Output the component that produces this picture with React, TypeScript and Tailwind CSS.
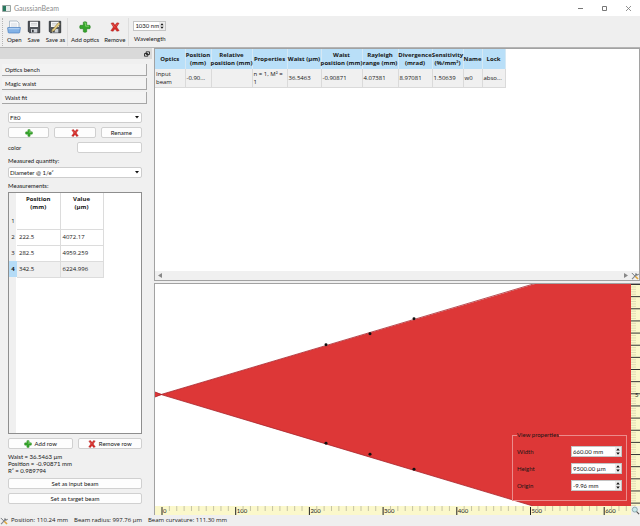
import { useState } from 'react';
import type { ReactNode } from 'react';

const columns = [
  { lines: ['Optics'], width: 'w-[30px]', value: 'Input beam', wrap: true },
  { lines: ['Position', '(mm)'], width: 'w-[26px]', value: '-0.90...', wrap: false },
  { lines: ['Relative', 'position (mm)'], width: 'w-[41px]', value: '', wrap: false },
  { lines: ['Properties'], width: 'w-[35px]', value: 'n = 1, M² = 1', wrap: true },
  { lines: ['Waist (µm)'], width: 'w-[34px]', value: '36.5463', wrap: false },
  { lines: ['Waist', 'position (mm)'], width: 'w-[41px]', value: '-0.90871', wrap: false },
  { lines: ['Rayleigh', 'range (mm)'], width: 'w-[36px]', value: '4.07381', wrap: false },
  { lines: ['Divergence', '(mrad)'], width: 'w-[34px]', value: '8.97081', wrap: false },
  { lines: ['Sensitivity', '(%/mm²)'], width: 'w-[31px]', value: '1.50639', wrap: false },
  { lines: ['Name'], width: 'w-[19px]', value: 'w0', wrap: false },
  { lines: ['Lock'], width: 'w-[23px]', value: 'abso...', wrap: false },
];

const measurements = [
  { position: '', value: '' },
  { position: '222.5', value: '4072.17' },
  { position: '282.5', value: '4959.259' },
  { position: '342.5', value: '6224.996' },
];

const viewFields = [
  { id: 'view-width', label: 'Width', value: '660.00 mm' },
  { id: 'view-height', label: 'Height', value: '9500.00 µm' },
  { id: 'view-origin', label: 'Origin', value: '-9.96 mm' },
];

// [x, y] of the measured radii, in plot units
const points = [
  [171, 61],
  [215, 50],
  [259, 35],
  [171, 160],
  [215, 171],
  [259, 186],
];

function PlusIcon({ className }: { className: string }) {
  return (
    <svg viewBox="0 0 12 12" className={className} aria-hidden="true">
      <path d="M4.3 1.2Q6 .1 7.7 1.2V4.3H10.8Q11.9 6 10.8 7.7H7.7V10.8Q6 11.9 4.3 10.8V7.7H1.2Q.1 6 1.2 4.3H4.3Z" fill="#35a52c" stroke="#25801f" strokeWidth=".6" />
      <path d="M5.2 2Q6 1.6 6.6 2V5.2H10" fill="none" stroke="#8bdb72" strokeWidth=".8" />
    </svg>
  );
}

function CrossIcon({ className }: { className: string }) {
  return (
    <svg viewBox="0 0 12 12" className={className} aria-hidden="true">
      <path d="M1.2 1.5 4 .9 6 3.8 8.3.9 10.9 1.4 8 5.9 11 10.4 8.2 11.2 6 8.1 3.8 11.2 1 10.5 4 5.9Z" fill="#d42a27" stroke="#a81614" strokeWidth=".5" />
      <path d="M2.4 1.9 6 6.6M9.4 1.9 7 5" fill="none" stroke="#f07a70" strokeWidth=".7" />
    </svg>
  );
}

function OpenIcon() {
  return (
    <svg viewBox="0 0 14 14" className="size-[14px]" aria-hidden="true">
      <path d="M2.5 1H10l2 2v6H2.5Z" fill="#f7f9fb" stroke="#9aa9b8" strokeWidth=".7" />
      <path d="M4 4h6M4 6h6" stroke="#c5ced8" strokeWidth=".7" />
      <path d="M1 7.5h12.4L12.7 12.4Q12.5 13 12 13H2Q1.3 13 1.2 12.4L.6 8Q.6 7.5 1 7.5Z" fill="#83b2e6" stroke="#4d83c0" strokeWidth=".7" />
      <path d="M1.6 8.7h11" stroke="#c3dcf8" strokeWidth=".9" />
    </svg>
  );
}

function SaveIcon({ pencil = false }: { pencil?: boolean }) {
  return (
    <svg viewBox="0 0 14 14" className="size-[14px]" aria-hidden="true">
      <path d="M1.3 1.3H12.7V12.7H2.5L1.3 11.5Z" fill="#50555b" stroke="#2f3338" strokeWidth=".9" />
      <path d="M3 1.7H11V7H3Z" fill="#f4f5f6" />
      <path d="M4 3.5h6M4 5h6" stroke="#b7bbc0" strokeWidth=".6" />
      <path d="M4 9H10.3V12.6H4Z" fill="#cbd0d5" />
      <path d="M5 9.7H6.7V12.2H5Z" fill="#3a3e43" />
      {pencil && <path d="M4.2 9.8 10.6 2.5 12.2 4 5.9 11 3.7 11.6Z" fill="#e7cf83" stroke="#85713c" strokeWidth=".6" />}
    </svg>
  );
}

function ToolsIcon({ className }: { className: string }) {
  return (
    <svg viewBox="0 0 10 10" className={className} aria-hidden="true">
      <path d="M1 1.2 5.2 5.4" stroke="#72777c" strokeWidth="1.2" />
      <path d="M5 5 8.8 8.8" stroke="#e0a63a" strokeWidth="2" />
      <path d="M1.3 8.8 7 3" stroke="#80868c" strokeWidth="1.4" />
      <path d="M6.2 1.5V3.7H8.6L9.4 2.4" fill="none" stroke="#565b60" strokeWidth="1.1" />
    </svg>
  );
}

function ToolButton({ icon, label }: { icon: ReactNode; label: string }) {
  return (
    <button type="button" className="flex flex-col items-center gap-[2px] leading-[8px]">
      {icon}
      <span>{label}</span>
    </button>
  );
}

function SpinBox({ id, initial, className }: { id: string; initial: string; className: string }) {
  const [value, setValue] = useState(initial);
  return (
    <div className={`flex border border-[#c4c4c4] bg-white ${className}`}>
      <input id={id} value={value} onChange={(e) => setValue(e.target.value)} className="w-0 min-w-0 flex-1 pl-px leading-[8px] outline-none" />
      <svg viewBox="0 0 6 10" className="h-full w-[6px] bg-[#ececec]" aria-hidden="true">
        <path d="M1 4 3 1.5 5 4ZM1 6 3 8.5 5 6Z" fill="#111" />
      </svg>
    </div>
  );
}

function PanelButton({ children, label }: { children: ReactNode; label?: string }) {
  return (
    <button type="button" aria-label={label} className="flex h-[11px] flex-1 items-center justify-center gap-[3px] rounded-[2px] border border-[#d0d0d0] bg-[#fdfdfd] leading-[9px]">
      {children}
    </button>
  );
}

function TitleBar() {
  return (
    <header className="flex h-4 items-center bg-white pr-[8px] pl-[2px] text-[7px] text-[#8c8c8c]">
      <svg viewBox="0 0 9 7" className="h-[7px] w-[9px]" aria-hidden="true">
        <path d="M.5.5h8v6h-8Z" fill="#e5ecea" stroke="#9aa5a2" />
        <path d="M1 1h3v5H1Z" fill="#28795f" />
      </svg>
      <h1 className="ml-[3px] flex-1">GaussianBeam</h1>
      <div className="flex gap-[17px]">
        <button type="button" aria-label="Minimize">
          <svg viewBox="0 0 7 7" className="size-[7px]"><path d="M1 3.5h5" stroke="#777" /></svg>
        </button>
        <button type="button" aria-label="Maximize">
          <svg viewBox="0 0 7 7" className="size-[7px]"><path d="M1.5 1.5h4v4h-4Z" fill="none" stroke="#777" /></svg>
        </button>
        <button type="button" aria-label="Close">
          <svg viewBox="0 0 7 7" className="size-[7px]"><path d="m1 1 5 5m0-5-5 5" stroke="#777" strokeWidth=".8" /></svg>
        </button>
      </div>
    </header>
  );
}

function Toolbar() {
  return (
    <div className="flex h-[31px] items-center bg-[#efefef] pl-[2px]">
      <div className="h-7 border-l border-dotted border-[#b5b5b5]" />
      <div className="flex gap-[5px] pr-[2px] pl-[4px]">
        <ToolButton icon={<OpenIcon />} label="Open" />
        <ToolButton icon={<SaveIcon />} label="Save" />
        <ToolButton icon={<SaveIcon pencil />} label="Save as" />
      </div>
      <div className="flex h-7 items-center gap-[5px] border-x border-[#dedede] px-[3px]">
        <ToolButton icon={<PlusIcon className="size-[14px] p-px" />} label="Add optics" />
        <ToolButton icon={<CrossIcon className="size-[14px] p-[2px]" />} label="Remove" />
      </div>
      <div className="flex flex-col items-center gap-[4px] pl-[4px]">
        <SpinBox id="wavelength" initial="1030 nm" className="h-[10px] w-[33px]" />
        <label htmlFor="wavelength" className="leading-[8px]">Wavelength</label>
      </div>
    </div>
  );
}

function Sidebar() {
  return (
    <aside className="flex w-[152px] shrink-0 flex-col bg-[#f0f0f0]">
      <div className="flex h-[11px] items-center justify-end bg-[#d9d9d9] pr-[2px]">
        <button type="button" aria-label="Float panel">
          <svg viewBox="0 0 7 7" className="size-[6px]">
            <path d="M2.5 1h4v3h-4ZM.5 3h4v3h-4Z" fill="#eee" stroke="#111" />
          </svg>
        </button>
      </div>
      <div className="flex flex-col gap-[2px] pt-[5px] pr-[5px] pl-[2px]">
        {['Optics bench', 'Magic waist', 'Waist fit'].map((name) => (
          <button key={name} type="button" className="h-3 border-r border-b border-[#a6a6a6] bg-[#f3f3f3] pl-[3px] text-left leading-[10px]">
            {name}
          </button>
        ))}
      </div>

      <div className="flex flex-1 flex-col pt-[8px] pr-[10px] pb-[11px] pl-[8px]">
        <Dropdown label="Fit" options={['Fit0']} />
        <div className="mt-[4px] flex gap-[5px]">
          <PanelButton label="Add fit"><PlusIcon className="size-[8px]" /></PanelButton>
          <PanelButton label="Remove fit"><CrossIcon className="size-[8px]" /></PanelButton>
          <PanelButton>Rename</PanelButton>
        </div>
        <div className="mt-[4px] flex h-[11px] items-center justify-between">
          <span id="color-label">color</span>
          <button type="button" aria-labelledby="color-label" className="h-[11px] w-[65px] rounded-[2px] border border-[#d0d0d0] bg-white" />
        </div>
        <label htmlFor="quantity" className="mt-[3px] leading-[10px]">Measured quantity:</label>
        <div className="mt-[1px] flex flex-col">
          <Dropdown id="quantity" options={['Diameter @ 1/e²']} />
        </div>
        <h2 id="measurements" className="mt-[3px] leading-[10px]">Measurements:</h2>
        <div className="mt-[1px] flex flex-1 border border-[#8e8e8e] bg-[linear-gradient(to_right,#f0f0f0_7px,#fff_7px)] font-['Open_Sans','Noto_Sans',sans-serif]">
          <table aria-labelledby="measurements" className="h-fit w-[94px] table-fixed border-collapse">
            <thead>
              <tr className="h-[20px] leading-[8px]">
                <th className="w-[8px]" />
                <th className="w-[43px] border-r border-[#dcdcdc]">Position<br />(mm)</th>
                <th className="w-[43px] border-r border-[#dcdcdc]">Value<br />(µm)</th>
              </tr>
            </thead>
            <tbody>
              {measurements.map((row, i) => (
                <tr key={i} className={i === 3 ? 'h-4 bg-[#f0f0f0]' : 'h-4'}>
                  <th className={i === 3 ? 'bg-[#b5dcf7] font-bold' : 'font-normal'}>{i + 1}</th>
                  <td className="border-r border-b border-[#dcdcdc] pl-[2px]">{row.position}</td>
                  <td className="border-r border-b border-[#dcdcdc] pl-[2px]">{row.value}</td>
                </tr>
              ))}
            </tbody>
          </table>
        </div>
        <div className="mt-[4px] flex gap-[5px]">
          <PanelButton><PlusIcon className="size-[8px]" />Add row</PanelButton>
          <PanelButton><CrossIcon className="size-[8px]" />Remove row</PanelButton>
        </div>
        <p className="mt-[4px] mb-[4px] leading-[7px]">
          Waist = 36.5463 µm<br />
          Position = -0.90871 mm<br />
          R² = 0.989794
        </p>
        <div className="flex"><PanelButton>Set as input beam</PanelButton></div>
        <div className="mt-[4px] flex"><PanelButton>Set as target beam</PanelButton></div>
      </div>
    </aside>
  );
}

function Dropdown({ id, label, options }: { id?: string; label?: string; options: string[] }) {
  return (
    <div className="flex h-[11px] items-center rounded-[2px] border border-[#cdcdcd] bg-white pr-[2px]">
      <select id={id} aria-label={label} className="w-0 flex-1 appearance-none pl-px leading-[9px] outline-none">
        {options.map((option) => <option key={option}>{option}</option>)}
      </select>
      <svg viewBox="0 0 4 3" className="h-[3px] w-[4px]" aria-hidden="true"><path d="M0 0h4L2 2.5Z" fill="#111" /></svg>
    </div>
  );
}

function OpticsTable() {
  return (
    <section className="flex h-[233px] flex-col border border-[#a2a2a2] bg-white">
      <div className="flex-1 font-['Open_Sans','Noto_Sans',sans-serif]">
        <table className="w-[350px] table-fixed border-collapse">
          <thead>
            <tr className="h-5 bg-[#b9dff8] leading-[8px]">
              {columns.map((col, i) => (
                <th key={i} className={`${col.width} border-r border-[#d5e8f4] p-0`}>
                  {col.lines.map((line) => (
                    <span key={line} className="flex justify-center whitespace-nowrap">{line}</span>
                  ))}
                </th>
              ))}
            </tr>
          </thead>
          <tbody>
            <tr className="h-[18px] bg-[#f0f0f0] leading-[8px]">
              {columns.map((col, i) => (
                <td key={i} className={`border-r border-b border-[#dadada] py-0 pl-px ${col.wrap ? '' : 'whitespace-nowrap'}`}>
                  {col.value}
                </td>
              ))}
            </tr>
          </tbody>
        </table>
      </div>
      <div className="flex h-[9px] items-center justify-between bg-[#f0f0f0] pl-[3px]">
        <svg viewBox="0 0 4 5" className="h-[5px] w-[4px]" aria-hidden="true"><path d="M4 0v5L0 2.5Z" fill="#888" /></svg>
        <div className="flex items-center gap-[3px]">
          <svg viewBox="0 0 4 5" className="h-[5px] w-[4px]" aria-hidden="true"><path d="M0 0v5l4-2.5Z" fill="#888" /></svg>
          <ToolsIcon className="size-[8px]" />
        </div>
      </div>
    </section>
  );
}

function BottomRuler() {
  const ticks = Array.from({ length: 64 }, (_, i) => i);
  return (
    <svg className="h-[9px] min-w-0 flex-1 bg-[#fbf8cb]" aria-hidden="true">
      {ticks.map((i) => {
        const x = `${((7 + i * 7.37) / 476) * 100}%`;
        const major = i % 10 === 0;
        return (
          <g key={i}>
            <line x1={x} x2={x} y1={major ? 1 : 0} y2={major ? 9 : 5} stroke={major ? '#222' : '#c6c4a4'} />
            {major && <text x={x} y="7" dx="1" fontSize="6" fill="#222">{i * 10}</text>}
          </g>
        );
      })}
    </svg>
  );
}

function SideRuler() {
  const ticks = Array.from({ length: 92 }, (_, i) => i);
  return (
    <svg className="w-[9px] self-stretch bg-[#fbf8cb]" aria-hidden="true">
      {ticks.map((i) => {
        const y = `${((0.5 + i * 2.44) / 223) * 100}%`;
        const major = i % 5 === 0;
        return <line key={i} x1="0" x2={major ? 9 : 5} y1={y} y2={y} stroke={major ? '#333' : '#d2d0ae'} strokeWidth={major ? 1 : 0.7} />;
      })}
      <text x="4" y="51%" fontSize="6" fill="#222">5</text>
    </svg>
  );
}

function BeamView() {
  return (
    <section className="relative mt-[2px] flex flex-1 flex-col border-t border-l border-[#a2a2a2] bg-white">
      <div className="flex flex-1">
        <div className="relative flex-1">
          <svg viewBox="0 0 476 223" preserveAspectRatio="none" className="absolute inset-0 size-full" role="img" aria-label="Beam profile">
            <path d="M0 108.5 7 110.7 380 0H476V223H378L7 111.3 0 113.5Z" fill="#dd3737" />
            <path d="M0 113.5 7 110.7 380-.5M0 108.5 7 111.3 378 223" fill="none" stroke="#a8242c" strokeWidth=".8" />
            {points.map(([x, y]) => <circle key={`${x}-${y}`} cx={x} cy={y} r="1.5" fill="#111" />)}
          </svg>
        </div>
        <SideRuler />
      </div>
      <div className="flex h-[9px]">
        <BottomRuler />
        <button type="button" aria-label="Zoom" className="w-[9px] bg-[#efefef]">
          <svg viewBox="0 0 9 9" className="size-[9px]">
            <circle cx="3.8" cy="3.6" r="2.5" fill="#c9e8ea" stroke="#7e9da3" strokeWidth=".8" />
            <path d="m5.6 5.6 2.5 2.5" stroke="#555" strokeWidth="1.2" />
          </svg>
        </button>
      </div>

      {/* Overlay on top of the beam */}
      <fieldset className="absolute right-[13px] bottom-[14px] w-[115px] border border-[#eb8c8c] pr-[4px] pb-[9px] pl-[4px]">
        <legend className="leading-[8px]">View properties</legend>
        <div className="flex flex-col gap-[6px] pt-[7px]">
          {viewFields.map((field) => (
            <div key={field.id} className="flex items-center justify-between">
              <label htmlFor={field.id}>{field.label}</label>
              <SpinBox id={field.id} initial={field.value} className="h-[11px] w-[51px]" />
            </div>
          ))}
        </div>
      </fieldset>
    </section>
  );
}

export default function App() {
  return (
    <div className="flex min-h-screen flex-col bg-[#efefef] font-['Lato','Noto_Sans',sans-serif] text-[6px] leading-[9px] text-[#161616]">
      <TitleBar />
      <Toolbar />
      <main className="flex flex-1 border-t border-[#b4b4b4]">
        <Sidebar />
        <div className="flex min-w-0 flex-1 flex-col pl-[2px]">
          <OpticsTable />
          <BeamView />
        </div>
      </main>
      <footer className="flex h-[11px] items-center gap-[6px] font-['Open_Sans','Noto_Sans',sans-serif]">
        <ToolsIcon className="size-[8px]" />
        <span className="-ml-[3px]">Position: 110.24 mm</span>
        <span>Beam radius: 997.76 µm</span>
        <span>Beam curvature: 111.30 mm</span>
      </footer>
    </div>
  );
}
